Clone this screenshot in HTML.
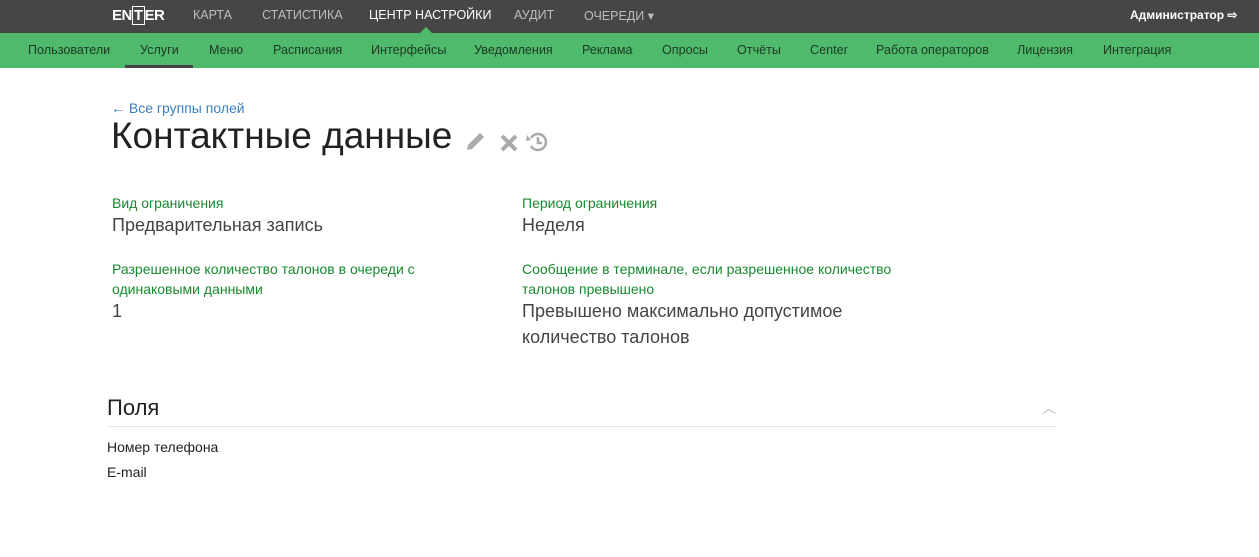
<!DOCTYPE html><html><head><meta charset="utf-8"><style>
body{margin:0;width:1259px;height:557px;background:#fff;font-family:"Liberation Sans",sans-serif;position:relative;overflow:hidden}
.a{position:absolute;white-space:nowrap}
.top{position:absolute;left:0;top:0;width:1259px;height:33px;background:#464646}
.top .a{top:8px;font-size:12.5px;color:#bdbdbd}
.sub{position:absolute;left:0;top:33px;width:1259px;height:35px;background:#4fb96c}
.sub .a{top:10px;font-size:12.6px;color:#1d3a24}
.lbl{color:#178a2e;font-size:14px;line-height:20px}
.val{color:#444;font-size:18px;line-height:26px}
</style></head><body>
<div class="top">
<div class="a" style="left:112px;top:7px;color:#fff;font-weight:bold;font-size:15px;letter-spacing:-0.5px">EN<span style="border:1.5px solid #fff;padding:0 1px">T</span>ER</div>
<div class="a" style="left:193px">КАРТА</div>
<div class="a" style="left:262px">СТАТИСТИКА</div>
<div class="a" style="left:369px;color:#fff">ЦЕНТР НАСТРОЙКИ</div>
<div class="a" style="left:514px">АУДИТ</div>
<div class="a" style="left:584px">ОЧЕРЕДИ ▾</div>
<div class="a" style="left:1130px;color:#fff;font-weight:bold;font-size:12px">Администратор ⇨</div>
</div>
<div style="position:absolute;left:420px;top:27px;width:0;height:0;border-left:6px solid transparent;border-right:6px solid transparent;border-bottom:6px solid #4fb96c"></div>
<div class="sub">
<div class="a" style="left:28px">Пользователи</div>
<div class="a" style="left:140px">Услуги</div>
<div class="a" style="left:209px">Меню</div>
<div class="a" style="left:273px">Расписания</div>
<div class="a" style="left:371px">Интерфейсы</div>
<div class="a" style="left:474px">Уведомления</div>
<div class="a" style="left:582px">Реклама</div>
<div class="a" style="left:662px">Опросы</div>
<div class="a" style="left:737px">Отчёты</div>
<div class="a" style="left:810px">Center</div>
<div class="a" style="left:876px">Работа операторов</div>
<div class="a" style="left:1017px">Лицензия</div>
<div class="a" style="left:1103px">Интеграция</div>
<div style="position:absolute;left:125px;top:32px;width:68px;height:3px;background:#444"></div>
</div>
<div class="a" style="left:111px;top:100px;font-size:14px;color:#3a7fc1">← Все группы полей</div>
<div class="a" style="left:111px;top:115px;font-size:37px;color:#222">Контактные данные</div>
<svg class="a" style="left:463px;top:130px" width="90" height="24" viewBox="0 0 90 24">
<path d="M4 20l1-5L17 3l4 4L9 19z" fill="#aaa"/>
<path d="M39 6l14 14M53 6L39 20" stroke="#aaa" stroke-width="4"/>
<path d="M68 8a8 8 0 1 1 0 8" stroke="#aaa" stroke-width="2.5" fill="none"/><path d="M64 5l4 5-5 1z" fill="#aaa"/><path d="M75 7v6h4" stroke="#aaa" stroke-width="2.5" fill="none"/>
</svg>
<div class="a lbl" style="left:112px;top:193px">Вид ограничения</div>
<div class="a val" style="left:112px;top:212px">Предварительная запись</div>
<div class="a lbl" style="left:522px;top:193px">Период ограничения</div>
<div class="a val" style="left:522px;top:212px">Неделя</div>
<div class="a lbl" style="left:112px;top:259px">Разрешенное количество талонов в очереди с<br>одинаковыми данными</div>
<div class="a val" style="left:112px;top:298px">1</div>
<div class="a lbl" style="left:522px;top:259px">Сообщение в терминале, если разрешенное количество<br>талонов превышено</div>
<div class="a val" style="left:522px;top:298px">Превышено максимально допустимое</div>
<div class="a val" style="left:522px;top:324px">количество талонов</div>
<div class="a" style="left:107px;top:395px;font-size:22px;color:#222">Поля</div>
<div class="a" style="left:1042px;top:398px;font-size:14px;color:#bbb">︿</div>
<div style="position:absolute;left:107px;top:426px;width:949px;height:1px;background:#e5e5e5"></div>
<div class="a" style="left:107px;top:439px;font-size:14px;color:#222">Номер телефона</div>
<div class="a" style="left:107px;top:464px;font-size:14px;color:#222">E-mail</div>
</body></html>
